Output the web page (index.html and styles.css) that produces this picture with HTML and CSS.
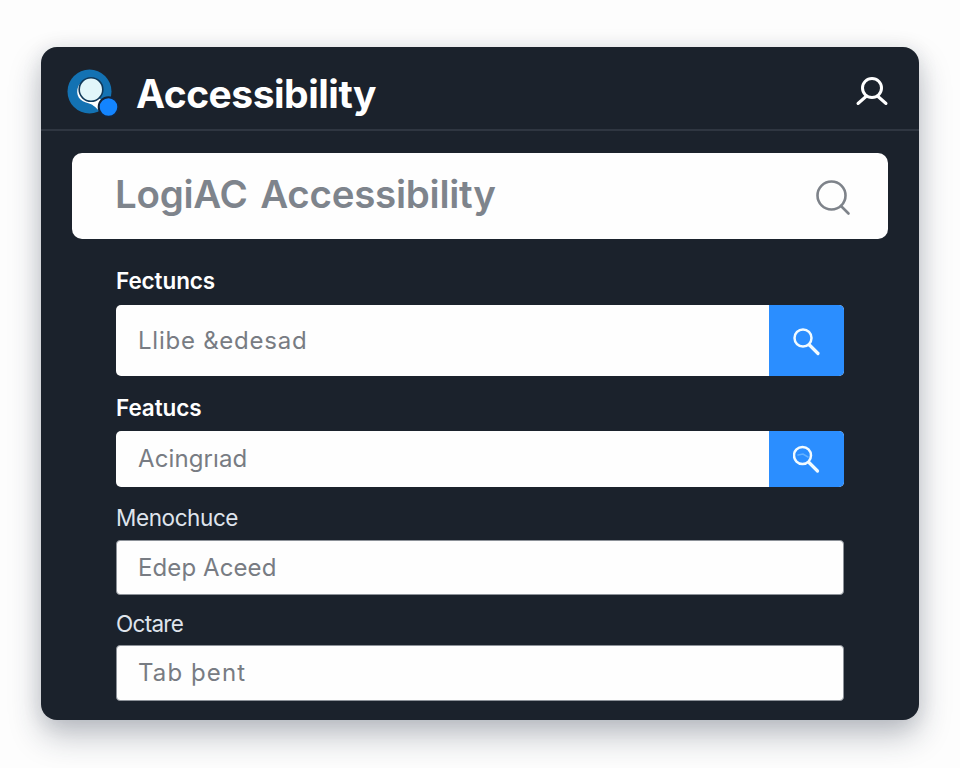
FILE: index.html
```
<!DOCTYPE html>
<html lang="en">
<head>
    <meta charset="UTF-8">
    <meta name="viewport" content="width=device-width, initial-scale=1.0">
    <title>Accessibility</title>
    <link rel="stylesheet" href="styles.css">
</head>
<body>
    <main class="panel">
        <header class="header">
            <svg class="logo" width="52" height="52" viewBox="0 0 52 52">
                <circle cx="22.5" cy="23.5" r="22" fill="#1372b3"/>
                <path d="M12.5 16C8 23 10 32 19 34.5C26 36 28 39 33 43.5Q31 38 35.5 33L31 29Z" fill="#fff"/>
                <circle cx="24" cy="21.5" r="11.8" fill="#e2f6fa" stroke="#10395a" stroke-width="1.6"/>
                <circle cx="41.5" cy="39" r="9.8" fill="#1384ff" stroke="#15243a" stroke-width="2"/>
            </svg>
            <h1 class="title">Accessibility</h1>
            <svg class="user" width="34" height="32" viewBox="0 0 34 32">
                <g fill="none" stroke="#fff" stroke-width="3" stroke-linecap="round">
                    <circle cx="17" cy="12" r="9.5"/>
                    <path d="M11 20.5L3 27.5M23 20.5L31 27.5"/>
                </g>
            </svg>
        </header>

        <div class="search">
            <span class="search-text">LogiAC Accessibility</span>
            <svg width="36" height="38" viewBox="0 0 36 38">
                <g fill="none" stroke="#7e838a" stroke-width="2.6" stroke-linecap="round">
                    <circle cx="16.5" cy="17.5" r="14"/>
                    <path d="M26 28L33.5 35.5"/>
                </g>
            </svg>
        </div>

        <form class="form">
            <div class="group first">
                <label class="label bold">Fectuncs</label>
                <div class="field tall">
                    <span class="value wide">Llibe &amp;edesad</span>
                    <button type="button" class="btn">
                        <svg width="28" height="30" viewBox="0 0 28 30">
                            <g fill="none" stroke="#f2fbff" stroke-linecap="round">
                                <circle cx="10" cy="11" r="8.5" stroke-width="2.5"/>
                                <path d="M16.5 18L25 26.5" stroke-width="3.2"/>
                            </g>
                        </svg>
                    </button>
                </div>
            </div>
            <div class="group second">
                <label class="label bold">Featucs</label>
                <div class="field medium">
                    <span class="value">Acingrıad</span>
                    <button type="button" class="btn">
                        <svg width="28" height="30" viewBox="0 0 28 30">
                            <g fill="none" stroke="#f2fbff" stroke-linecap="round">
                                <path d="M5 10L10 9L15 12" stroke="#64b1ff" stroke-width="1.5"/>
                                <circle cx="9.5" cy="10.5" r="8.5" stroke-width="2.5"/>
                                <path d="M16 17.5L24.5 26" stroke-width="3.2"/>
                            </g>
                        </svg>
                    </button>
                </div>
            </div>
            <div class="group third">
                <label class="label">Menochuce</label>
                <div class="field plain">
                    <span class="value">Edep Aceed</span>
                </div>
            </div>
            <div class="group fourth">
                <label class="label octare">Octare</label>
                <div class="field plain last">
                    <span class="value tab">Tab þent</span>
                </div>
            </div>
        </form>
    </main>
</body>
</html>
```
FILE: styles.css
```
* {
    box-sizing: border-box;
}
body {
    margin: 0;
    padding: 47px 41px 48px;
    height: 768px;
    background: #fdfdfd;
    font-family: Inter, "Liberation Sans", sans-serif;
    overflow: hidden;
}
.panel {
    height: 673px;
    background: #1b222c;
    border-radius: 16px;
    box-shadow: 0 16px 32px rgba(30, 40, 60, 0.28), 0 2px 20px rgba(30, 40, 60, 0.1);
}
.header {
    display: flex;
    align-items: center;
    height: 84px;
    padding: 4px 30px 0 26px;
    border-bottom: 2px solid #2f3641;
}
.logo {
    margin: 7px 17px 0 0;
}
.title {
    margin: 8px auto 0 0;
    font-size: 39px;
    font-weight: 700;
    line-height: 48px;
    letter-spacing: -0.5px;
    color: #fff;
}
.user {
    margin-top: 3px;
}
.search {
    display: flex;
    align-items: center;
    justify-content: space-between;
    height: 86px;
    margin: 22px 31px 0;
    padding: 2px 37px 0 43px;
    background: #fefefe;
    border-radius: 10px;
}
.search-text {
    padding-bottom: 6px;
    font-size: 38.5px;
    font-weight: 600;
    line-height: 48px;
    letter-spacing: -0.25px;
    word-spacing: 3px;
    color: #7e848c;
}
.form {
    padding: 0 75px;
}
.group {
    display: flex;
    flex-direction: column;
}
.label {
    margin-bottom: 8px;
    font-size: 22.5px;
    line-height: 28px;
    letter-spacing: -0.4px;
    color: #dfe4ec;
}
.bold {
    margin-bottom: 9px;
    font-weight: 600;
    letter-spacing: -0.1px;
    color: #fff;
}
.octare {
    margin-bottom: 7px;
    letter-spacing: -0.7px;
}
.first {
    padding-top: 28px;
}
.first .label {
    margin-bottom: 10px;
}
.second {
    padding-top: 18px;
}
.third {
    padding-top: 17px;
}
.fourth {
    padding-top: 15px;
}
.field {
    display: flex;
    align-items: center;
    justify-content: space-between;
    padding-left: 22px;
    background: #fefefe;
    border-radius: 5px;
    overflow: hidden;
}
.tall {
    height: 71px;
}
.medium {
    height: 56px;
}
.plain {
    height: 55px;
    padding-left: 21px;
    border: 1px solid #8d9299;
    border-radius: 4px;
}
.last {
    height: 56px;
}
.value {
    font-size: 24px;
    line-height: 30px;
    letter-spacing: 0.1px;
    color: #787c83;
}
.wide {
    letter-spacing: 0.75px;
}
.tab {
    letter-spacing: 1.1px;
}
.btn {
    display: flex;
    align-items: center;
    justify-content: center;
    align-self: stretch;
    width: 75px;
    padding: 2px 0 0;
    border: none;
    background: #2b8eff;
}
```
